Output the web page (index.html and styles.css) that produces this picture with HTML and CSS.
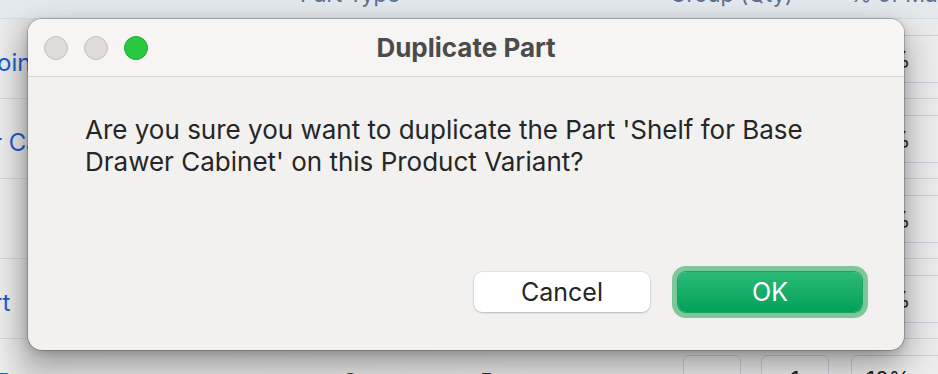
FILE: index.html
```html
<!DOCTYPE html>
<html>
<head>
<meta charset="utf-8">
<link rel="stylesheet" href="styles.css">
</head>
<body>
<div class="screen">
  <div class="page">
    <div class="thead">
      <span class="th th-type">Part Type</span>
      <span class="th th-qty">Group (Qty)</span>
      <span class="th th-pct">% of Mat</span>
    </div>
    <div class="row">
      <span class="link">oint Stile</span>
      <span class="cell-text"></span>
      <span class="field f1"></span><span class="field f2"></span><span class="field f3">10%</span>
    </div>
    <div class="row">
      <span class="link link-2">r Cabinet</span>
      <span class="cell-text"></span>
      <span class="field f1"></span><span class="field f2"></span><span class="field f3">10%</span>
    </div>
    <div class="row">
      <span class="link"></span>
      <span class="cell-text"></span>
      <span class="field f1"></span><span class="field f2"></span><span class="field f3">10%</span>
    </div>
    <div class="row">
      <span class="link link-3">rt</span>
      <span class="cell-text"></span>
      <span class="field f1"></span><span class="field f2"></span><span class="field f3">10%</span>
    </div>
    <div class="row">
      <span class="link">Part</span>
      <span class="cell-text">Component Part</span>
      <span class="field f1"></span><span class="field f2">1</span><span class="field f3">10%</span>
    </div>
  </div>

  <div class="dialog">
    <div class="titlebar">
      <div class="lights">
        <span class="light gray"></span>
        <span class="light gray"></span>
        <span class="light green"></span>
      </div>
      <div class="title">Duplicate Part</div>
      <div></div>
    </div>
    <div class="body">
      <p class="message">Are you sure you want to duplicate the Part 'Shelf for Base<br>Drawer Cabinet' on this Product Variant?</p>
      <div class="buttons">
        <button class="btn cancel">Cancel</button>
        <button class="btn ok">OK</button>
      </div>
    </div>
  </div>
</div>
</body>
</html>
```

FILE: styles.css
```css
* { box-sizing: border-box; }
html, body { margin: 0; padding: 0; }
body {
  font-family: Inter, "Noto Sans", "Liberation Sans", sans-serif;
  background: #e8e8e8;
}
.screen {
  position: relative;
  width: 938px;
  height: 374px;
  overflow: hidden;
  background: linear-gradient(90deg, #efefef 0%, #e9e9e9 100%);
}
.page {
  display: flex;
  flex-direction: column;
}
.thead {
  height: 19px;
  background: #e4e9ee;
  border-bottom: 1px solid #d6dbe0;
  overflow: hidden;
  display: flex;
}
.th {
  display: block;
  flex: none;
  font-size: 22px;
  line-height: 22px;
  margin-top: -17px;
  color: #5c6f8e;
  white-space: nowrap;
}
.th-type { margin-left: 300px; width: 330px; }
.th-qty { margin-left: 40px; width: 150px; }
.th-pct { margin-left: 30px; }
.row {
  height: 80px;
  border-bottom: 1px solid #d2d2d2;
  display: flex;
  align-items: center;
  background: linear-gradient(90deg, #ececec 0%, #dedede 3%, #e8e8e8 8%, #ebebeb 100%);
}
.link {
  flex: none;
  width: 330px;
  padding-top: 8px;
  color: #1a5ccc;
  font-size: 24px;
  white-space: nowrap;
  overflow: hidden;
  margin-left: -3px;
}
.link-2 { margin-left: -7px; width: 334px; }
.link-3 { margin-left: -7px; width: 334px; }
.cell-text {
  flex: none;
  width: 350px;
  margin-left: 14px;
  font-size: 24px;
  color: #333;
  white-space: nowrap;
  padding-top: 8px;
}
.field {
  height: 48px;
  border: 1px solid #c6cedb;
  border-radius: 6px;
  display: flex;
  align-items: center;
  justify-content: center;
  font-size: 22px;
  color: #222;
  background: #ececec;
  flex: none;
}
.f1 { width: 58px; margin-left: -8px; }
.f2 { width: 68px; margin-left: 20px; }
.f3 { width: 100px; margin-left: 22px; justify-content: flex-start; padding-left: 14px; }

.dialog {
  position: absolute;
  left: 28px;
  top: 19px;
  width: 876px;
  height: 331px;
  border-radius: 14px;
  background: #f2f1ef;
  box-shadow: 0 0 0 1px rgba(0,0,0,0.18), 0 14px 34px rgba(0,0,0,0.38), 0 2px 8px rgba(0,0,0,0.15);
  display: flex;
  flex-direction: column;
  overflow: hidden;
}
.titlebar {
  height: 58px;
  flex: none;
  background: #f6f5f3;
  border-bottom: 1px solid #d4d3d1;
  display: grid;
  grid-template-columns: 1fr auto 1fr;
  align-items: center;
}
.lights {
  display: flex;
  gap: 16px;
  padding-left: 16px;
}
.light {
  width: 24px;
  height: 24px;
  border-radius: 50%;
}
.gray { background: #dcdbd8; border: 1px solid #c3c2bf; }
.green { background: #28c840; border: 1px solid #1eaa33; }
.title {
  font-weight: 700;
  font-size: 26px;
  color: #4b4b4b;
  letter-spacing: 0;
}
.body {
  flex: 1;
  display: flex;
  flex-direction: column;
  padding: 37px 42px 38px 57px;
}
.message {
  margin: 0;
  font-size: 26px;
  line-height: 32px;
  color: #262626;
}
.buttons {
  margin-top: auto;
  display: flex;
  justify-content: flex-end;
  gap: 28px;
}
.btn {
  font-family: inherit;
  height: 40px;
  border-radius: 8px;
  border: none;
  padding: 0;
}
.cancel {
  width: 176px;
  font-size: 25px;
  background: #ffffff;
  color: #262626;
  box-shadow: 0 0 0 0.5px rgba(0,0,0,0.12), 0 1px 2px rgba(0,0,0,0.18);
}
.ok {
  width: 184px;
  font-size: 25px;
  color: #ffffff;
  background: linear-gradient(180deg, #2bba76 0%, #03a159 100%);
  box-shadow: 0 0 0 1px #1f9e5f, 0 0 0 6px #7cc89b;
}
```
